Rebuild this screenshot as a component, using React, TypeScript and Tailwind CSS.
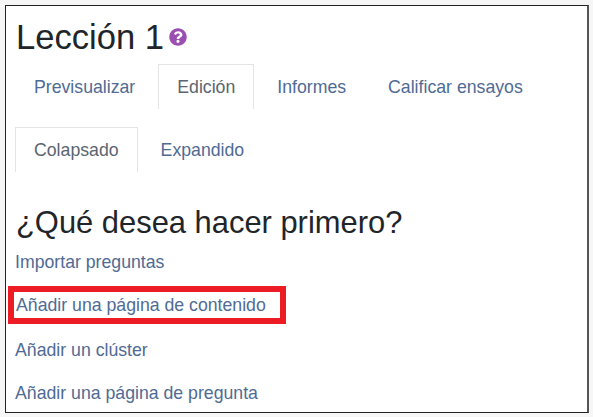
import React from "react";

const sans = "font-['Liberation_Sans',Arial,sans-serif]";

function Tab({ label, active }: { label: string; active?: boolean }) {
  return (
    <a
      href="#"
      className={
        active
          ? "block h-[45px] px-[18px] pt-[9px] border border-b-0 border-[#e4e4e4] text-[#5a6570]"
          : "block h-[45px] px-[19px] pt-[10px] text-[#4f6b94]"
      }
    >
      {label}
    </a>
  );
}

function App() {
  return (
    <div className={`w-[593px] h-[417px] bg-[#f6f6f6] pt-[5px] pl-[5px] ${sans}`}>
      <div className="w-[584px] h-[408px] bg-white border border-[#222] border-r-2 border-r-[#555] pl-[9px] text-[17.7px] leading-[26px]">
        <div className="flex items-center h-[58px] pt-[4px] pl-px">
          <h1 className="text-[34.6px] leading-[40px] text-[#212529]">Lección 1</h1>
          <svg viewBox="0 0 512 512" className="w-[18px] h-[18px] ml-[5px] fill-[#9b4fb0]">
            <path d="M504 256c0 137-111 248-248 248S8 393 8 256 119 8 256 8s248 111 248 248zM263 90c-54 0-89 23-116 64-4 5-3 12 3 16l35 26c5 4 13 3 17-2 18-23 30-36 58-36 21 0 46 13 46 33 0 15-12 23-33 34-23 13-54 30-54 71v6c0 7 5 12 12 12h56c7 0 12-5 12-12v-3c0-29 83-30 83-106 0-57-59-103-119-103zm-7 243c-25 0-46 21-46 46s21 46 46 46 46-21 46-46-21-46-46-46z" />
          </svg>
        </div>
        <div className="flex gap-[4px]">
          <Tab label="Previsualizar" />
          <Tab label="Edición" active />
          <Tab label="Informes" />
          <Tab label="Calificar ensayos" />
        </div>
        <div className="flex gap-[4px] mt-[18px]">
          <Tab label="Colapsado" active />
          <Tab label="Expandido" />
        </div>
        <h2 className="mt-[33px] pl-px text-[30.9px] leading-[36px] text-[#212529]">¿Qué desea hacer primero?</h2>
        <div className="flex flex-col text-[#4f6b94]">
          <a href="#" className="block mt-[8px]">Importar preguntas</a>
          <div className="mt-[11px] -ml-[7px] w-[278px] h-[38px] border-[6px] border-[#ed1c24] pl-[2px] leading-[27px] text-[#4f6b94]">
            Añadir una página de contenido
          </div>
          <a href="#" className="block mt-[13px]">Añadir un clúster</a>
          <a href="#" className="block mt-[17px]">Añadir una página de pregunta</a>
        </div>
      </div>
    </div>
  );
}

export default App;
